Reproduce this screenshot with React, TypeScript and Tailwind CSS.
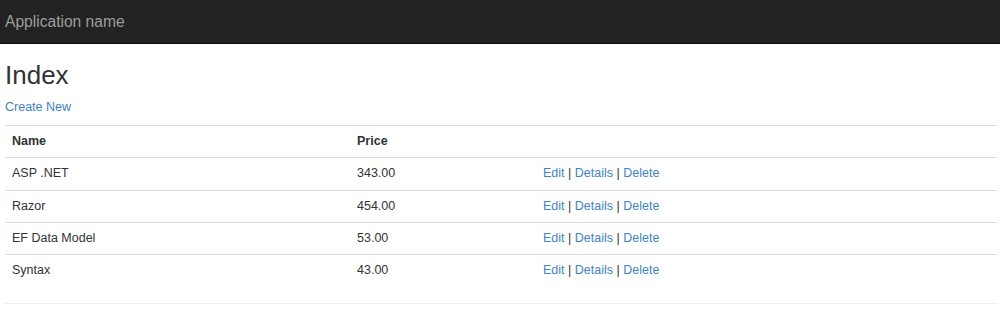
const items = [
  { name: "ASP .NET", price: "343.00" },
  { name: "Razor", price: "454.00" },
  { name: "EF Data Model", price: "53.00" },
  { name: "Syntax", price: "43.00" },
];

function Actions() {
  return (
    <>
      <a href="#" className="text-[#3f83c4]">Edit</a> |{" "}
      <a href="#" className="text-[#3f83c4]">Details</a> |{" "}
      <a href="#" className="text-[#3f83c4]">Delete</a>
    </>
  );
}

export default function App() {
  return (
    <div className="min-h-screen bg-white text-[#333] font-['Liberation_Sans',Arial,sans-serif]">
      <div className="h-[44px] bg-[#222] border-b border-[#080808] flex items-center px-[5px]">
        <a href="#" className="text-[15.6px] leading-[17.4px] text-[#9d9d9d]">Application name</a>
      </div>

      <div className="pl-[5px] pr-[3px]">
        <h2 className="mt-[17.4px] mb-[8.7px] text-[26px] leading-[1.1] font-normal">Index</h2>
        <p className="mb-[8.7px] text-[12.5px] leading-[17.4px]">
          <a href="#" className="text-[#3f83c4]">Create New</a>
        </p>

        <table className="w-full border-collapse text-[12.5px] leading-[17.4px]">
          <tbody>
            <tr className="border-t border-[#ddd]">
              <th className="w-[345px] px-[7px] py-[7px] text-left font-bold">Name</th>
              <th className="w-[186px] px-[7px] py-[7px] text-left font-bold">Price</th>
              <th className="px-[7px] py-[7px]"></th>
            </tr>
            {items.map((item) => (
              <tr key={item.name} className="border-t border-[#ddd]">
                <td className="px-[7px] py-[7px]">{item.name}</td>
                <td className="px-[7px] py-[7px]">{item.price}</td>
                <td className="px-[7px] py-[7px]">
                  <Actions />
                </td>
              </tr>
            ))}
          </tbody>
        </table>

        <hr className="mt-[16px] border-t border-[#eee]" />
      </div>
    </div>
  );
}
